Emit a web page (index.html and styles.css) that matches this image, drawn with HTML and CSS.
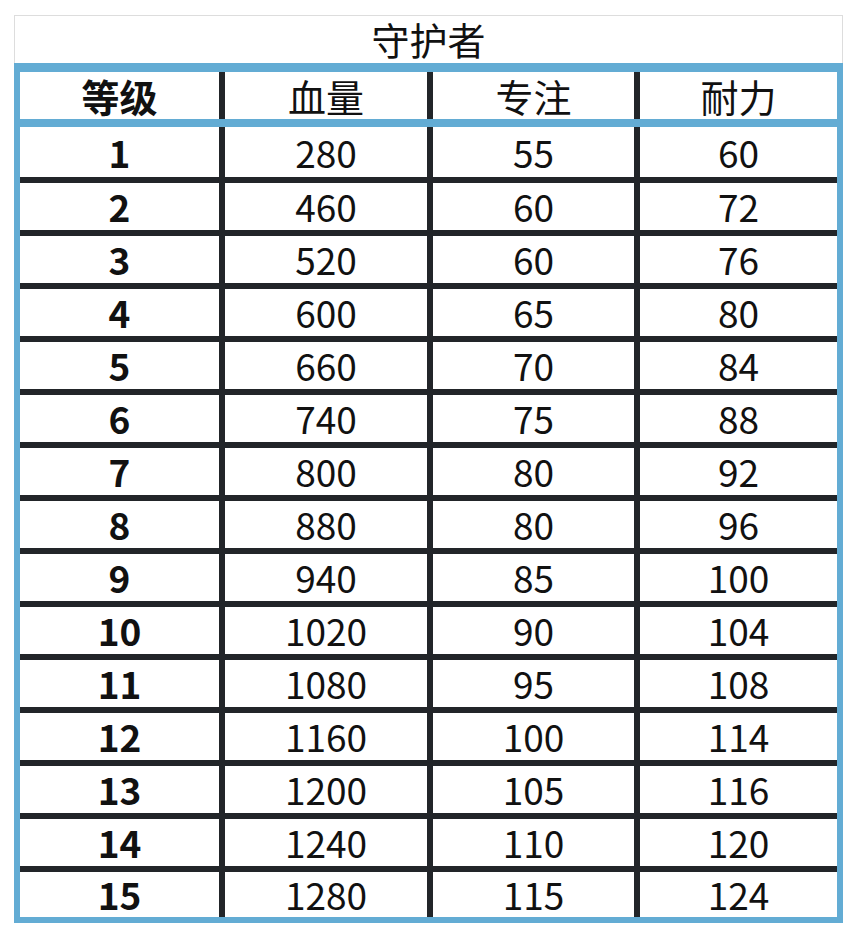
FILE: index.html
```html
<!DOCTYPE html>
<html lang="zh-CN">
<head>
<meta charset="utf-8">
<title>守护者</title>
<link rel="stylesheet" href="styles.css">
</head>
<body>
<div class="sheet">
  <div class="title">守护者</div>
  <table class="stats">
    <thead>
      <tr><th class="lv c1">等级</th><th class="c2">血量</th><th class="c3">专注</th><th class="c4">耐力</th></tr>
    </thead>
    <tbody>
      <tr><td class="lv">1</td><td>280</td><td>55</td><td>60</td></tr>
      <tr><td class="lv">2</td><td>460</td><td>60</td><td>72</td></tr>
      <tr><td class="lv">3</td><td>520</td><td>60</td><td>76</td></tr>
      <tr><td class="lv">4</td><td>600</td><td>65</td><td>80</td></tr>
      <tr><td class="lv">5</td><td>660</td><td>70</td><td>84</td></tr>
      <tr><td class="lv">6</td><td>740</td><td>75</td><td>88</td></tr>
      <tr><td class="lv">7</td><td>800</td><td>80</td><td>92</td></tr>
      <tr><td class="lv">8</td><td>880</td><td>80</td><td>96</td></tr>
      <tr><td class="lv">9</td><td>940</td><td>85</td><td>100</td></tr>
      <tr><td class="lv">10</td><td>1020</td><td>90</td><td>104</td></tr>
      <tr><td class="lv">11</td><td>1080</td><td>95</td><td>108</td></tr>
      <tr><td class="lv">12</td><td>1160</td><td>100</td><td>114</td></tr>
      <tr><td class="lv">13</td><td>1200</td><td>105</td><td>116</td></tr>
      <tr><td class="lv">14</td><td>1240</td><td>110</td><td>120</td></tr>
      <tr><td class="lv">15</td><td>1280</td><td>115</td><td>124</td></tr>
    </tbody>
  </table>
</div>
</body>
</html>
```
FILE: styles.css
```css
html, body {
  margin: 0;
  padding: 0;
  background: #ffffff;
}

body {
  font-family: "Noto Sans CJK SC", "Noto Sans", sans-serif;
  color: #111111;
}

.sheet {
  margin: 15px 0 0 14px;
  width: 829px;
}

.title {
  box-sizing: border-box;
  height: 48px;
  border: 1px solid #dddddd;
  border-bottom: none;
  text-align: center;
  font-size: 38px;
  line-height: 46px;
  font-weight: 400;
}

.stats {
  width: 829px;
  table-layout: fixed;
  border-collapse: separate;
  border-spacing: 0;
  border-style: solid;
  border-color: #63acd4;
  border-width: 9px 6px 6px 6px;
}

.stats th,
.stats td {
  box-sizing: border-box;
  padding: 0;
  text-align: center;
  vertical-align: middle;
  font-size: 37px;
  line-height: 1;
}

.stats td {
  border-right: 6px solid #222529;
}

.stats .c1 { width: 205px; }
.stats .c2 { width: 208px; }
.stats .c3 { width: 207px; }
.stats .c4 { width: 197px; }

.stats td:last-child {
  border-right: none;
}

.stats th {
  height: 55px;
  font-weight: 400;
  border-bottom: 8px solid #63acd4;
  font-size: 38px;
  padding-right: 6px;
  background-image: linear-gradient(#222529, #222529);
  background-repeat: no-repeat;
  background-position: right top;
  background-size: 6px 100%;
  background-origin: padding-box;
  background-clip: padding-box;
}

.stats th:last-child {
  padding-right: 0;
  background-image: none;
}

.stats th.lv,
.stats td.lv {
  font-weight: 700;
}

.stats td {
  height: 53px;
  border-bottom: 6px solid #222529;
}

.stats tbody tr:first-child td {
  height: 56px;
}

.stats tbody tr:last-child td {
  height: 45px;
  border-bottom: none;
}
```
